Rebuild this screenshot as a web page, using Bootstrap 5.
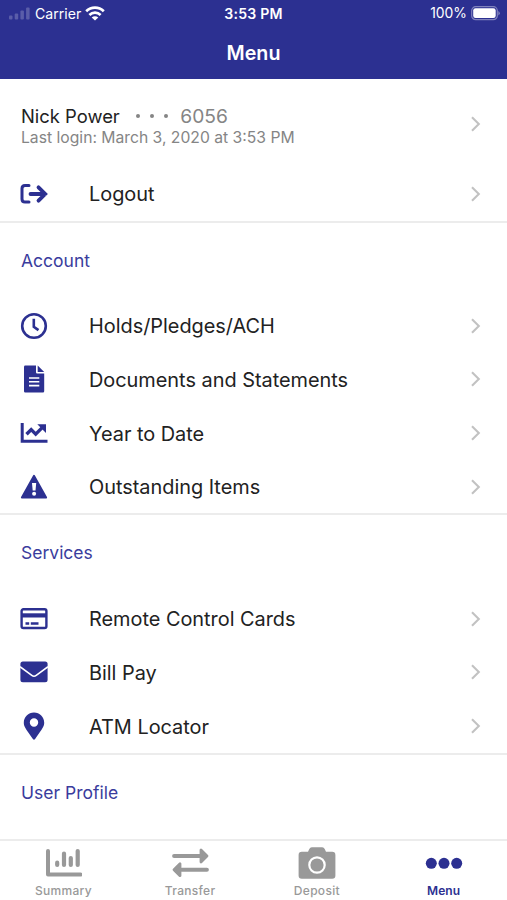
<!DOCTYPE html>
<html lang="en">
<head>
<meta charset="utf-8">
<meta name="viewport" content="width=device-width, initial-scale=1">
<title>Menu</title>
<link href="https://cdn.jsdelivr.net/npm/bootstrap@5.3.0/dist/css/bootstrap.min.css" rel="stylesheet">
<style>
:root { --brand: #2c3091; }
body { font-family: Inter, "Liberation Sans", sans-serif; color: #222; height: 900px; overflow: hidden; background: #fff; }
svg { display: block; flex: none; }
.app-head { background: var(--brand); height: 79px; color: #fff; }
.status { height: 27px; font-size: 14.1px; line-height: 27px; padding: 0 7px 0 9px; }
.status > div { flex: 1 1 0; }
.status .clock { margin-left: -2px; letter-spacing: .2px; }
.status .carrier { margin-left: 5px; }
.status .percent { font-size: 13.9px; }
.app-title { font-size: 19.7px; font-weight: 600; line-height: 52px; }
.profile { height: 88px; padding: 1px 26px 0 21px; }
.profile-text { padding-top: 4px; }
.who { font-size: 18.4px; line-height: 23px; }
.who .digits { font-size: 19.2px; margin-left: 12px; }
.muted { color: #858585; }
.login { font-size: 15.7px; line-height: 19px; }
.dots { gap: 9.5px; margin-left: 16px; }
.dots i { width: 4.5px; height: 4.5px; border-radius: 50%; background: #858585; }
.item { height: 53.6px; padding: 0 26px 0 20px; font-size: 19.9px; }
.item .label { padding-top: 3px; letter-spacing: -.01px; }
.item .ico { width: 69px; color: var(--brand); }
.ico svg { width: 28px; height: 28px; }
.block { border-top: 2px solid #ececec; }
.block h2 { height: 76.5px; margin: 0; padding-left: 21px; font-size: 17.5px; font-weight: 400; line-height: 76px; color: #3a3c9d; }
.tabs { height: 61px; border-top: 2px solid #ececec; background: #fff; color: #999; font-size: 12px; font-weight: 500; letter-spacing: .3px; }
.tabs a { flex: 1 1 0; color: inherit; text-decoration: none; line-height: 14px; }
.tabs svg { width: 38px; height: 36px; margin-top: 5px; margin-bottom: 2px; }
.tabs a.current { color: var(--brand); font-weight: 600; letter-spacing: .1px; }
</style>
</head>
<body class="d-flex flex-column">
<svg class="d-none">
  <symbol id="chev" viewBox="0 0 12 18"><path d="M3 2.300 9.800 9 3 15.700" fill="none" stroke="#c2c2c2" stroke-width="2.100"/></symbol>
</svg>
<header class="app-head flex-shrink-0">
  <div class="status d-flex">
    <div class="d-flex align-items-center">
      <svg width="21" height="13" viewBox="0 0 21 13" fill="#fff" fill-opacity=".22"><rect y="8.500" width="3.500" height="4" rx="1"/><rect x="5.700" y="6.500" width="3.500" height="6" rx="1"/><rect x="11.400" y="3.500" width="3.500" height="9" rx="1"/><rect x="17.100" y=".5" width="3.500" height="12" rx="1"/></svg>
      <span class="carrier">Carrier</span>
      <svg class="ms-1" width="20" height="15" viewBox="0 0 20 15" fill="none" stroke="#fff" stroke-width="2.700"><path d="M1.200 5.300c5-4.800 12.600-4.800 17.600 0M4.400 8.900c3.200-3 8-3 11.200 0"/><path d="M10 14.500 6.700 11.500c1.800-1.700 4.800-1.700 6.600 0z" fill="#fff" stroke="none"/></svg>
    </div>
    <div class="clock text-center fw-semibold">3:53 PM</div>
    <div class="d-flex align-items-center justify-content-end">
      <span class="percent">100%</span>
      <svg class="ms-1" width="29" height="15" viewBox="0 0 29 15"><rect x=".7" y=".7" width="25.600" height="13" rx="4" fill="none" stroke="#fff" stroke-opacity=".4" stroke-width="1.200"/><rect x="2.200" y="2.300" width="22.500" height="9.800" rx="2.300" fill="#fff"/><path d="M27.300 5v4.500q1.500-.6 1.500-2.200T27.300 5z" fill="#fff" fill-opacity=".4"/></svg>
    </div>
  </div>
  <div class="app-title text-center">Menu</div>
</header>

<main class="flex-grow-1 overflow-hidden">
  <div class="profile d-flex align-items-center justify-content-between">
    <div class="profile-text">
      <div class="who d-flex align-items-center">Nick Power
        <span class="dots d-flex"><i></i><i></i><i></i></span>
        <span class="digits muted">6056</span>
      </div>
      <div class="login muted">Last login: March 3, 2020 at 3:53 PM</div>
    </div>
    <svg width="12" height="18"><use href="#chev"/></svg>
  </div>
  <div class="item d-flex align-items-center">
    <span class="ico"><svg viewBox="0 0 28 28" fill="none" stroke="currentColor" stroke-width="3" stroke-linecap="round" stroke-linejoin="round"><path d="M9 5.500H5Q2 5.500 2 8.500v10.500q0 3 3 3h4"/><path d="M10.500 14H25M18.500 7.300 25.200 14l-6.700 6.700" stroke-width="3.800" stroke-linejoin="miter"/></svg></span>
    <span class="label flex-grow-1">Logout</span><svg width="12" height="18"><use href="#chev"/></svg>
  </div>

  <section class="block">
    <h2>Account</h2>
    <div class="item d-flex align-items-center">
      <span class="ico"><svg viewBox="0 0 28 28" fill="none" stroke="currentColor" stroke-width="2.600"><circle cx="14" cy="14" r="11.800"/><path d="M13.800 6.800v8l4.700 3.300"/></svg></span>
      <span class="label flex-grow-1">Holds/Pledges/ACH</span><svg width="12" height="18"><use href="#chev"/></svg>
    </div>
    <div class="item d-flex align-items-center">
      <span class="ico"><svg viewBox="0 0 28 28" fill="currentColor"><path d="M5.300.6H16v6.700q0 1.300 1.300 1.300H24.200v17.600q0 1.200-1.200 1.200H5.300q-1.300 0-1.300-1.200V1.900Q4 .6 5.300.6z"/><path d="M17.700.6 24.200 7H17.700z"/><path d="M9 13h10.300M9 16.800h10.300M9 20.600h10.300" stroke="#fff" stroke-width="1.600"/></svg></span>
      <span class="label flex-grow-1">Documents and Statements</span><svg width="12" height="18"><use href="#chev"/></svg>
    </div>
    <div class="item d-flex align-items-center">
      <span class="ico"><svg viewBox="0 0 28 28" fill="none" stroke="currentColor"><path d="M2.200 4v18.200H27.500" stroke-width="3"/><path d="m6.500 15.300 4.700-4.700 4.500 4.500 7-7" stroke-width="3.400"/><path d="M17.300 5.300h8.700v8.700z" fill="currentColor" stroke="none"/></svg></span>
      <span class="label flex-grow-1">Year to Date</span><svg width="12" height="18"><use href="#chev"/></svg>
    </div>
    <div class="item d-flex align-items-center">
      <span class="ico"><svg viewBox="0 0 28 28"><path d="M14 3 26 24.500H2z" fill="currentColor" stroke="currentColor" stroke-width="2.200" stroke-linejoin="round"/><path d="M12 10h4.200l-.7 7.500h-2.800z" fill="#fff"/><circle cx="14.100" cy="20.800" r="2" fill="#fff"/></svg></span>
      <span class="label flex-grow-1">Outstanding Items</span><svg width="12" height="18"><use href="#chev"/></svg>
    </div>
  </section>

  <section class="block">
    <h2>Services</h2>
    <div class="item d-flex align-items-center">
      <span class="ico"><svg viewBox="0 0 28 28"><rect x="1.600" y="4.200" width="24.800" height="18.800" rx="1.800" fill="none" stroke="currentColor" stroke-width="2.400"/><path d="M1.500 10.400h25" stroke="currentColor" stroke-width="4.200"/><path d="M5.500 18.500h3.700M10.800 18.500h7.700" stroke="currentColor" stroke-width="2.500"/></svg></span>
      <span class="label flex-grow-1">Remote Control Cards</span><svg width="12" height="18"><use href="#chev"/></svg>
    </div>
    <div class="item d-flex align-items-center">
      <span class="ico"><svg viewBox="0 0 28 28"><rect x=".4" y="3.600" width="27.200" height="20.600" rx="2.500" fill="currentColor"/><path d="m0 8.700 11.800 8.700q2.200 1.600 4.400 0L28 8.700" fill="none" stroke="#fff" stroke-width="1.600"/></svg></span>
      <span class="label flex-grow-1">Bill Pay</span><svg width="12" height="18"><use href="#chev"/></svg>
    </div>
    <div class="item d-flex align-items-center">
      <span class="ico"><svg viewBox="0 0 28 28"><path fill-rule="evenodd" fill="currentColor" d="M14 .4C8.300.4 3.800 4.900 3.800 10.500c0 4 1.300 5.300 9.100 16.500q1.100 1.300 2.200 0c7.800-11.200 9.100-12.500 9.100-16.500C24.200 4.900 19.700.4 14 .4zm0 5.900a4.200 4.200 0 1 1 0 8.400 4.200 4.200 0 0 1 0-8.400z"/></svg></span>
      <span class="label flex-grow-1">ATM Locator</span><svg width="12" height="18"><use href="#chev"/></svg>
    </div>
  </section>

  <section class="block"><h2>User Profile</h2></section>
</main>

<nav class="tabs d-flex flex-shrink-0">
  <a href="#" class="d-flex flex-column align-items-center">
    <svg viewBox="0 0 38 36" fill="none" stroke="currentColor" stroke-linecap="round" stroke-linejoin="round"><path d="M4 5v23.500h32.500" stroke-width="4"/><path d="M13.200 16.700v2.300M20 7.500v11.500M26.800 12v7M33.700 5v14" stroke-width="4.200"/></svg>
    Summary</a>
  <a href="#" class="d-flex flex-column align-items-center">
    <svg viewBox="0 0 38 36" fill="currentColor" stroke="currentColor" stroke-linejoin="round" stroke-linecap="round"><path d="M3.100 10h26M10.500 23.700h25.400" stroke-width="4"/><path d="M30 4v12l6-6zM9 17.700v12l-6-6z" stroke-width="2.800"/></svg>
    Transfer</a>
  <a href="#" class="d-flex flex-column align-items-center">
    <svg viewBox="0 0 38 36"><path fill="currentColor" d="M3.800 5.700H10l1.300-2.700Q12 1.200 13.800 1.200h10.400q1.800 0 2.500 1.800L28 5.700h6.200q3.200 0 3.200 3.200v20.600q0 3.200-3.200 3.200H3.800Q.6 32.700.6 29.500V8.900q0-3.200 3.200-3.200z"/><circle cx="19" cy="19" r="7.700" fill="none" stroke="#fff" stroke-width="2.200"/></svg>
    Deposit</a>
  <a href="#" class="current d-flex flex-column align-items-center">
    <svg viewBox="0 0 38 36" fill="currentColor"><circle cx="6.300" cy="17.300" r="5.500"/><circle cx="19" cy="17.300" r="5.500"/><circle cx="31.700" cy="17.300" r="5.500"/></svg>
    Menu</a>
</nav>
<script src="https://cdn.jsdelivr.net/npm/bootstrap@5.3.0/dist/js/bootstrap.bundle.min.js"></script>
</body>
</html>
